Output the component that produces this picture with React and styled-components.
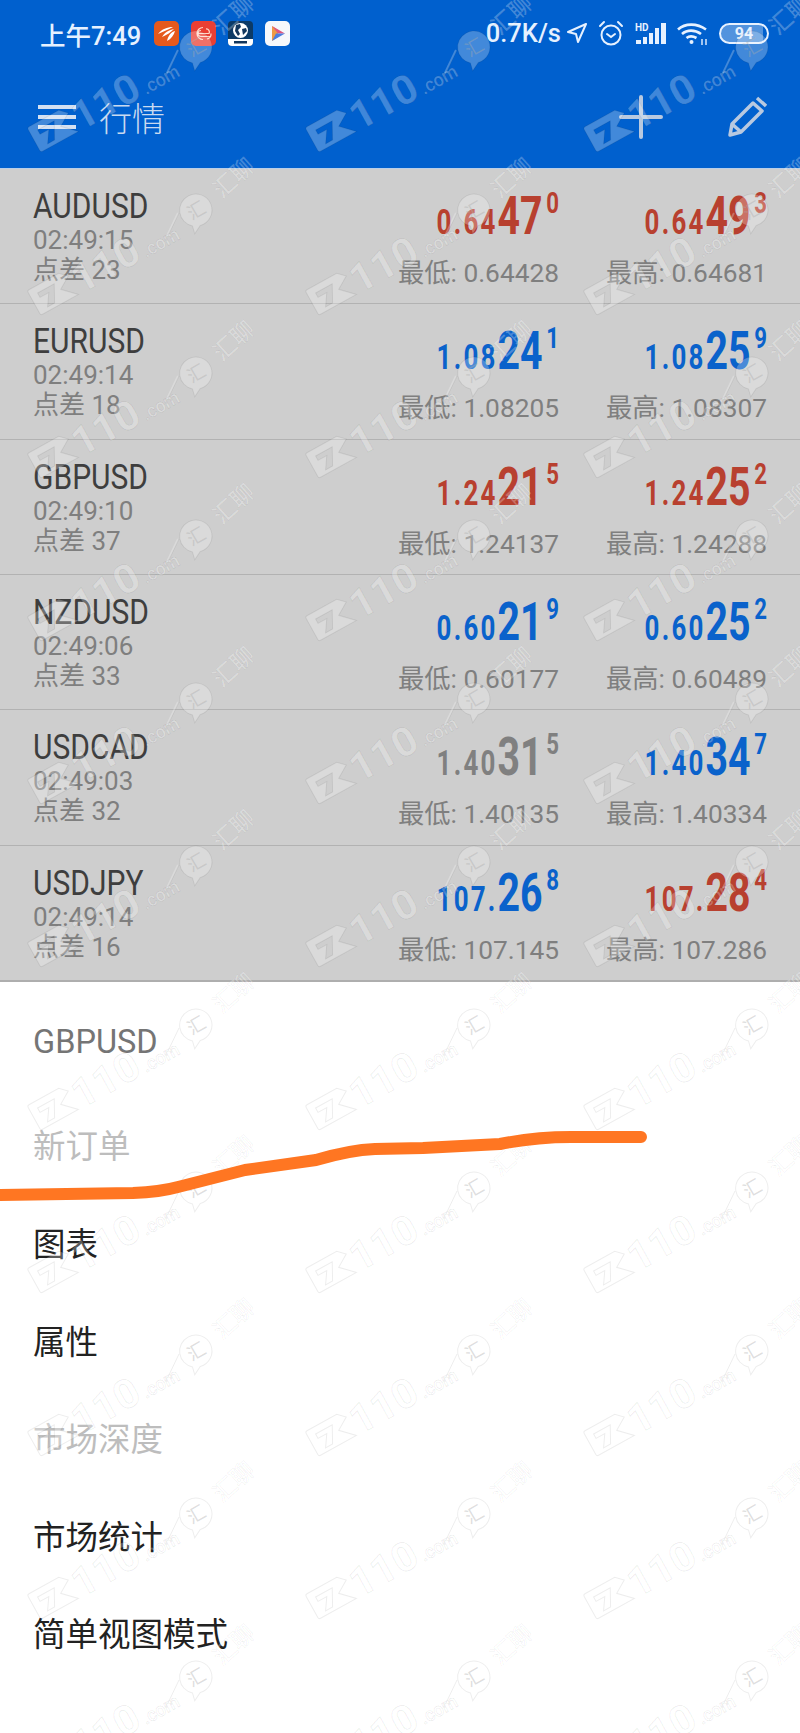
import React from 'react';
import styled, { createGlobalStyle } from 'styled-components';

const Global = createGlobalStyle`
  html, body { margin: 0; padding: 0; background: #fff; }
  body { font-family: Roboto, "Noto Sans CJK SC", sans-serif; }
  #root { width: 800px; height: 1733px; overflow: hidden; }
`;

const FONT = `Roboto, "Noto Sans CJK SC", sans-serif`;
const COLORS = { red: '#b8402f', blue: '#0a62cb', gray: '#808080' };

const Page = styled.div`
  position: relative;
  width: 800px;
  height: 1733px;
  display: flex;
  flex-direction: column;
  overflow: hidden;
  font-family: ${FONT};
`;

const Header = styled.header`
  height: 168px;
  background: #0060ce;
  display: flex;
  flex-direction: column;
  border-bottom: 1px solid #b9cfe9;
`;

const StatusBar = styled.div`
  height: 66px;
  display: flex;
  align-items: center;
  padding: 0 31px 0 40px;
  color: #e6f1ff;
`;

const Clock = styled.span`
  font-size: 25.5px;
  font-weight: 500;
  width: 114px;
  white-space: nowrap;
`;

const NoticeIcons = styled.div`
  display: flex;
  gap: 12px;
  flex: 1;
`;

const AppIcon = styled.svg`
  width: 25px;
  height: 25px;
  display: block;
`;

const NetSpeed = styled.span`
  font-size: 25.5px;
  font-weight: 500;
  margin-right: 6px;
`;

const StatusIcons = styled.div`
  display: flex;
  align-items: center;
  gap: 11px;
`;

const Glyph = styled.svg`
  display: block;
  width: ${p => p.$w}px;
  height: ${p => p.$h}px;
`;

const Battery = styled.span`
  width: 50px;
  height: 21px;
  box-sizing: border-box;
  border: 2px solid #e6f1ff;
  border-radius: 11px;
  font-size: 16px;
  font-weight: 700;
  line-height: 17px;
  text-align: center;
  color: #e6f1ff;
  background: linear-gradient(90deg, rgba(255,255,255,.32) 0 92%, transparent 92%);
`;

const Toolbar = styled.div`
  flex: 1;
  display: flex;
  align-items: center;
  padding: 0 33px 0 38px;
  color: #c3d5ec;
`;

const Title = styled.span`
  font-size: 33px;
  font-family: "Noto Sans CJK SC", sans-serif;
  font-weight: 300;
  margin-left: 23px;
  flex: 1;
  color: #c9daf0;
`;

const ToolbarIcons = styled.div`
  display: flex;
  align-items: center;
  gap: 64px;
`;

const QuoteList = styled.div`
  height: 813px;
  display: flex;
  flex-direction: column;
  background: #cecece;
  border-bottom: 2px solid #aeaeae;
  box-sizing: border-box;
`;

const Row = styled.div`
  flex: 1;
  display: grid;
  grid-template-columns: 1fr 208px 208px;
  padding: 0 33px;
  border-bottom: 1px solid #b2b2b2;
  box-sizing: border-box;
  &:last-child { border-bottom: 0; }
`;

const Info = styled.div`
  padding-top: 19px;
`;

const Symbol = styled.div`
  font-size: 30px;
  line-height: 36px;
  color: #3e3e3e;
  transform: scaleY(1.17);
  transform-origin: left center;
`;

const InfoLine = styled.div`
  font-size: 26px;
  line-height: ${p => p.$lh}px;
  color: #7f7f7f;
`;

const Quote = styled.div`
  text-align: right;
  padding-top: 21px;
`;

const Price = styled.div`
  font-weight: 700;
  font-size: 53px;
  line-height: 52px;
  white-space: nowrap;
  color: ${p => COLORS[p.$tone]};
  transform: scaleX(0.74);
  transform-origin: right center;
`;

const PriceHead = styled.span`
  font-size: 35px;
  letter-spacing: 3px;
`;

const PriceTail = styled.span`
  font-size: 30px;
  margin-left: 5px;
  vertical-align: 21px;
  line-height: 0;
`;

const Range = styled.div`
  font-size: 26.300px;
  line-height: 30px;
  margin-top: 9px;
  color: #7f7f7f;
  white-space: nowrap;
`;

const Menu = styled.div`
  flex: 1;
  background: #fff;
  padding: 35px 0 0 33px;
`;

const MenuItem = styled.div`
  font-size: 32.500px;
  font-family: ${FONT};
  height: ${p => p.$h}px;
  line-height: 50px;
  color: ${p => p.$color};
`;

const Overlay = styled.div`
  position: absolute;
  inset: 0;
  pointer-events: none;
  display: grid;
  grid-template-columns: repeat(3, 278px);
  grid-auto-rows: 163px;
`;

const Stroke = styled.svg`
  position: absolute;
  left: 0;
  top: 1120px;
  pointer-events: none;
`;

const quotes = [
  { s: 'AUDUSD', t: '02:49:15', sp: 23, bid: ['0.64', '47', '0'], ask: ['0.64', '49', '3'], bt: 'red', at: 'red', lo: '0.64428', hi: '0.64681' },
  { s: 'EURUSD', t: '02:49:14', sp: 18, bid: ['1.08', '24', '1'], ask: ['1.08', '25', '9'], bt: 'blue', at: 'blue', lo: '1.08205', hi: '1.08307' },
  { s: 'GBPUSD', t: '02:49:10', sp: 37, bid: ['1.24', '21', '5'], ask: ['1.24', '25', '2'], bt: 'red', at: 'red', lo: '1.24137', hi: '1.24288' },
  { s: 'NZDUSD', t: '02:49:06', sp: 33, bid: ['0.60', '21', '9'], ask: ['0.60', '25', '2'], bt: 'blue', at: 'blue', lo: '0.60177', hi: '0.60489' },
  { s: 'USDCAD', t: '02:49:03', sp: 32, bid: ['1.40', '31', '5'], ask: ['1.40', '34', '7'], bt: 'gray', at: 'blue', lo: '1.40135', hi: '1.40334' },
  { s: 'USDJPY', t: '02:49:14', sp: 16, bid: ['107.', '26', '8'], ask: ['107.', '28', '4'], bt: 'blue', at: 'red', lo: '107.145', hi: '107.286' },
];

const menu = [
  { label: 'GBPUSD', color: '#757575', h: 105 },
  { label: '新订单', color: '#bdbdbd', h: 98 },
  { label: '图表', color: '#222', h: 98 },
  { label: '属性', color: '#222', h: 97 },
  { label: '市场深度', color: '#bdbdbd', h: 98 },
  { label: '市场统计', color: '#222', h: 97 },
  { label: '简单视图模式', color: '#222', h: 98 },
];

const PriceView = ({ parts, tone }) => (
  <Price $tone={tone}>
    <PriceHead>{parts[0]}</PriceHead>
    {parts[1]}
    <PriceTail>{parts[2]}</PriceTail>
  </Price>
);

const Watermark = () => {
  const fill = 'rgba(255,255,255,.26)';
  const line = 'rgba(0,0,0,.07)';
  return (
    <svg width="278" height="163" viewBox="0 0 278 163" style={{ display: 'block', overflow: 'visible' }}>
      <g transform="translate(34 140) rotate(-29)" fill={fill} stroke={line} strokeWidth="1">
        <path fillRule="evenodd" d="M2 -14H36L43 -7 30 1 43 14H2a2 2 0 0 1-2-2V-12a2 2 0 0 1 2-2ZM8 -7V-2H18L10 10H18L27 -7Z" />
        <text x="45" y="15" fontFamily="Roboto, sans-serif" fontSize="40" fontWeight="700" textLength="72" lengthAdjust="spacingAndGlyphs">110</text>
        <text x="120" y="15" fontFamily="Roboto, sans-serif" fontSize="19" fontWeight="500" textLength="40" lengthAdjust="spacingAndGlyphs">.com</text>
      </g>
      <path d="M167 73L178 50" stroke={fill} strokeWidth="2" />
      <path d="M167 73L178 50" stroke={line} strokeWidth="1" transform="translate(1 0)" />
      <g transform="translate(196 47)" fill={fill} stroke={line}>
        <path d="M0 -16a16 16 0 1 1-4 31.500L-13 20l2-8A16 16 0 0 1 0 -16Z" transform="rotate(-30)" />
        <text x="-9" y="7" fontSize="18" fontFamily='"Noto Sans CJK SC", sans-serif' fill="rgba(170,170,170,.4)" stroke="none" transform="rotate(-30)">汇</text>
      </g>
      <text x="0" y="0" transform="translate(222 36) rotate(-42)" fontSize="23" fontFamily='"Noto Sans CJK SC", sans-serif' fontWeight="500" fill={fill} stroke={line} strokeWidth=".6">汇聊</text>
    </svg>
  );
};

const tiles = Array.from({ length: 33 }, (_, i) => i);

export default function App() {
  return (
    <Page>
      <Global />
      <Header>
        <StatusBar>
          <Clock>上午7:49</Clock>
          <NoticeIcons>
            <AppIcon viewBox="0 0 25 25">
              <rect width="25" height="25" rx="5" fill="#e5591c" />
              <path d="M4 13C8 8 13 6 19 6 15 8 9 11 4 13ZM8 16C11 11 15 9 20 8 17 11 13 14 8 16ZM13 20C14 15 17 11 21 10 20 14 17 18 13 20Z" fill="#fff" />
            </AppIcon>
            <AppIcon viewBox="0 0 25 25">
              <rect width="25" height="25" rx="5" fill="#ea3f33" />
              <path d="M12 6.500A6 6 0 1 0 12 18.500M10 9.500A3 3 0 1 0 10 15.500H20M7 12.500H18A3 3 0 0 0 15 8M20 12.500A5 5 0 0 1 16 18" fill="none" stroke="#ffd9c9" strokeWidth="1.200" />
            </AppIcon>
            <AppIcon viewBox="0 0 25 25">
              <rect width="25" height="25" rx="4" fill="#0c3a66" />
              <circle cx="12.500" cy="9.500" r="7.500" fill="#fff" />
              <path d="M8 4l4-1 1 3-3 3 2 4-2 2-3-5ZM14 8l4-1 1 3-4 4Z" fill="#12365c" />
              <path d="M0 18H25V21a4 4 0 0 1-4 4H4a4 4 0 0 1-4-4Z" fill="#fff" />
              <rect x="6" y="20" width="13" height="2.500" fill="#12365c" />
            </AppIcon>
            <AppIcon viewBox="0 0 25 25">
              <rect width="25" height="25" rx="5" fill="#f6f8fb" />
              <path d="M7 5L13 9V16L7 20Z" fill="#f09a45" />
              <path d="M7 5L20 12.500 13 12.500Z" fill="#e0567e" />
              <path d="M7 20L20 12.500 11 12.500Z" fill="#4b7ee0" />
            </AppIcon>
          </NoticeIcons>
          <NetSpeed>0.7K/s</NetSpeed>
          <StatusIcons>
            <Glyph $w={20} $h={20} viewBox="0 0 20 20" fill="none" stroke="#e6f1ff" strokeWidth="2">
              <path d="M19 1L1 9l8 2 2 8Z" strokeLinejoin="round" />
            </Glyph>
            <Glyph $w={26} $h={26} viewBox="0 0 26 26" fill="none" stroke="#e6f1ff" strokeWidth="2" strokeLinecap="round">
              <circle cx="13" cy="15" r="9.500" />
              <path d="M9 14l4 3 4-3M2 6l4-4M24 6l-4-4" />
            </Glyph>
            <Glyph $w={31} $h={22} viewBox="0 0 31 22" fill="#e6f1ff">
              <text x="0" y="9" fontSize="10" fontWeight="700" fontFamily="Roboto, sans-serif">HD</text>
              <rect x="1" y="18" width="5" height="4" />
              <rect x="8" y="15" width="4" height="7" />
              <rect x="14" y="11" width="4" height="11" />
              <rect x="20" y="6" width="4" height="16" />
              <rect x="26" y="1" width="5" height="21" />
            </Glyph>
            <Glyph $w={31} $h={23} viewBox="0 0 31 23" fill="none" stroke="#e6f1ff" strokeWidth="2.600">
              <path d="M1 7.500C8 1 20 1 29 7.500M5 12C10 7.500 18 7.500 24 12M9.500 16C12 14 16 14 19.500 16" />
              <circle cx="14.500" cy="20" r="2" fill="#e6f1ff" stroke="none" />
              <path d="M25 17v6M29 17v6" strokeWidth="1.400" />
            </Glyph>
            <Battery>94</Battery>
          </StatusIcons>
        </StatusBar>
        <Toolbar>
          <Glyph $w={38} $h={26} viewBox="0 0 38 26" fill="#d3e0f2">
            <rect width="38" height="4" y="1" />
            <rect width="38" height="4" y="11" />
            <rect width="38" height="4" y="21" />
          </Glyph>
          <Title>行情</Title>
          <ToolbarIcons>
            <Glyph $w={44} $h={44} viewBox="0 0 44 44" stroke="#b8c9e0" strokeWidth="4" strokeLinecap="round">
              <path d="M22 2V42M2 22H42" />
            </Glyph>
            <Glyph $w={40} $h={42} viewBox="0 0 40 42" fill="none" stroke="#b8c9e0" strokeWidth="3.500" strokeLinejoin="round">
              <path d="M3 39L5 28 26 7 35 15 14 36ZM5 28L14 36M30 2L39 10" />
            </Glyph>
          </ToolbarIcons>
        </Toolbar>
      </Header>
      <QuoteList>
        {quotes.map(q => (
          <Row key={q.s}>
            <Info>
              <Symbol>{q.s}</Symbol>
              <InfoLine $lh={33}>{q.t}</InfoLine>
              <InfoLine $lh={27}>点差 {q.sp}</InfoLine>
            </Info>
            <Quote>
              <PriceView parts={q.bid} tone={q.bt} />
              <Range>最低: {q.lo}</Range>
            </Quote>
            <Quote>
              <PriceView parts={q.ask} tone={q.at} />
              <Range>最高: {q.hi}</Range>
            </Quote>
          </Row>
        ))}
      </QuoteList>
      <Menu>
        {menu.map(m => (
          <MenuItem key={m.label} $h={m.h} $color={m.color}>{m.label}</MenuItem>
        ))}
      </Menu>
      <Overlay>
        {tiles.map(i => <Watermark key={i} />)}
      </Overlay>
      <Stroke width="800" height="90" viewBox="0 1120 800 90" fill="none">
        <path d="M-5 1195L133 1193Q160 1192 178 1187L245 1170 316 1160Q350 1150 375 1149L423 1148 500 1144Q535 1137 571 1137L641 1137" stroke="#ff7622" strokeWidth="12" strokeLinecap="round" strokeLinejoin="round" />
      </Stroke>
    </Page>
  );
}
